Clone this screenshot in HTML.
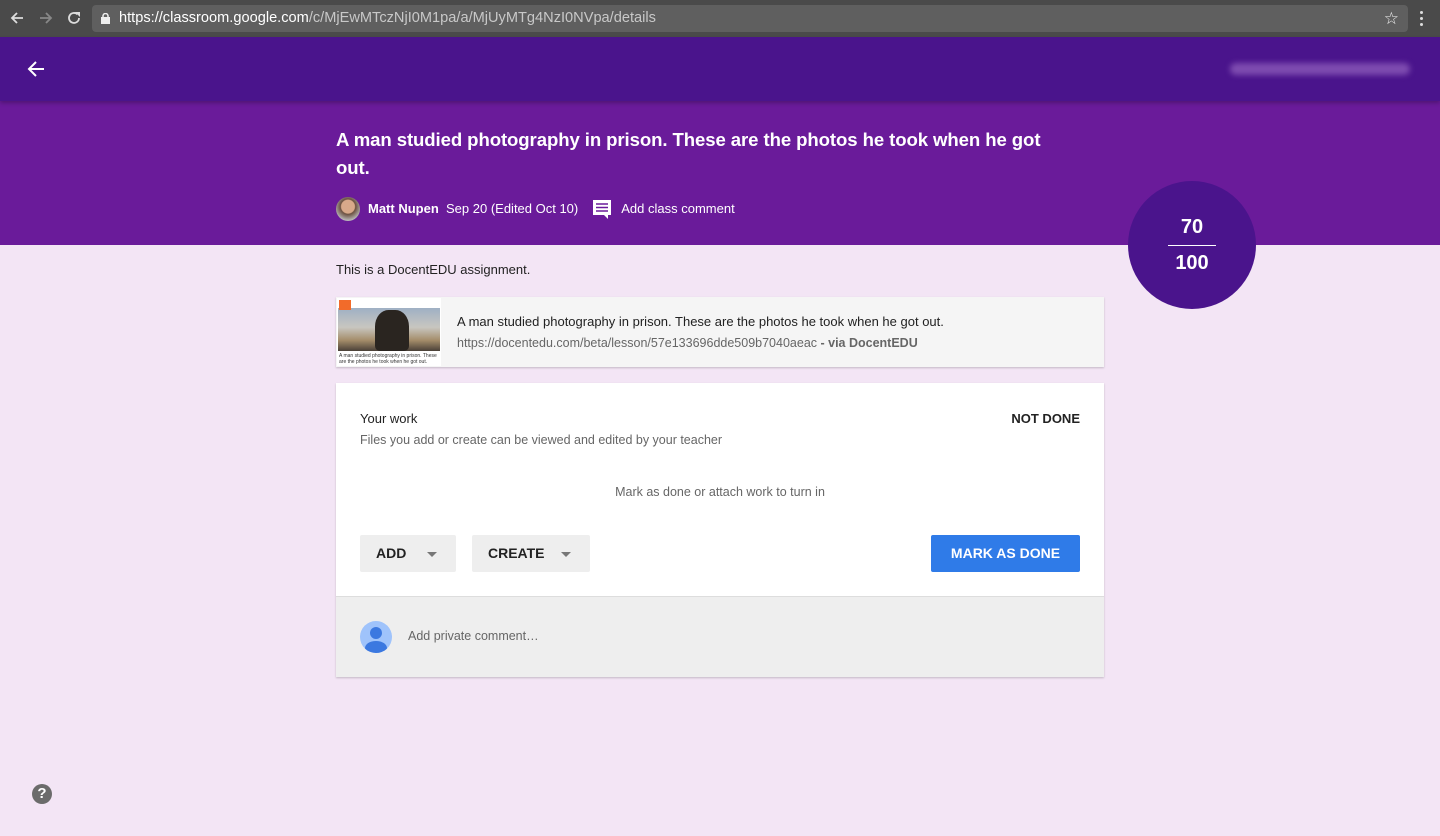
<!DOCTYPE html>
<html><head><meta charset="utf-8"><style>
*{box-sizing:border-box;margin:0;padding:0}
body{width:1440px;height:836px;overflow:hidden;background:#f3e5f5;font-family:"Liberation Sans",Arial,sans-serif;position:relative}
.chrome{position:absolute;left:0;top:0;width:1440px;height:37px;background:#4a4a4a}
.url{position:absolute;left:92px;top:5px;width:1316px;height:27px;background:#5f5f5f;border-radius:4px;color:#fff;font-size:14.6px;line-height:27px;padding-left:27px}
.url span{color:#c8c8c8}
.top{position:absolute;left:0;top:37px;width:1440px;height:64px;background:#4a148c;box-shadow:0 2px 4px rgba(0,0,0,.25);z-index:2}
.hdr{position:absolute;left:0;top:101px;width:1440px;height:144px;background:#6a1b9a}
.title{position:absolute;left:336px;top:126px;width:740px;color:#fff;font-size:18.6px;font-weight:bold;line-height:28px;letter-spacing:-0.1px}
.meta{position:absolute;left:336px;top:197px;height:24px;color:#fff;font-size:13px;line-height:24px;display:flex;align-items:center}
.circle{position:absolute;left:1128px;top:181px;width:128px;height:128px;border-radius:50%;background:#4a148c;color:#fff;font-weight:bold;font-size:20px;text-align:center}
.card{position:absolute;background:#fff;box-shadow:0 1px 2px rgba(0,0,0,.2)}
.btn{position:absolute;top:535px;height:37px;background:#eee;border-radius:2px;font-size:14px;font-weight:bold;color:#222;line-height:37px;padding-left:16px}
.tri{position:absolute;top:17px;width:0;height:0;border-left:5px solid transparent;border-right:5px solid transparent;border-top:5px solid #777}
</style></head><body>
<div class="chrome">
<svg style="position:absolute;left:9px;top:10px" width="16" height="16" viewBox="0 0 16 16"><path d="M14 8H3M8 3L3 8l5 5" stroke="#ddd" stroke-width="1.8" fill="none"/></svg>
<svg style="position:absolute;left:38px;top:10px" width="16" height="16" viewBox="0 0 16 16"><path d="M2 8h11M8 3l5 5-5 5" stroke="#888" stroke-width="1.8" fill="none"/></svg>
<svg style="position:absolute;left:66px;top:10px" width="16" height="16" viewBox="0 0 16 16"><path d="M13 8a5 5 0 1 1-1.5-3.6" stroke="#ddd" stroke-width="1.8" fill="none"/><path d="M9 2h5v5z" fill="#ddd"/></svg>
<div class="url"><svg style="position:absolute;left:9px;top:8px" width="9" height="11"><rect x="0" y="4" width="9" height="7" fill="#eee"/><path d="M2 5V3a2.5 2.5 0 0 1 5 0v2" stroke="#eee" stroke-width="1.5" fill="none"/></svg>https://classroom.google.com<span>/c/MjEwMTczNjI0M1pa/a/MjUyMTg4NzI0NVpa/details</span>
<div style="position:absolute;right:9px;top:0;color:#eee;font-size:17px">☆</div></div>
<div style="position:absolute;left:1420px;top:11px;width:3px;height:3px;background:#ddd;border-radius:50%;box-shadow:0 6px 0 #ddd,0 12px 0 #ddd"></div>
</div>
<div class="top">
<svg style="position:absolute;left:27px;top:23px" width="18" height="18" viewBox="0 0 18 18"><path d="M17 9H3M9 2L2 9l7 7" stroke="#fff" stroke-width="2" fill="none"/></svg>
<div style="position:absolute;left:1230px;top:26px;width:180px;height:12px;background:#7e4cb0;filter:blur(3px);border-radius:6px"></div>
</div>
<div class="hdr"></div>
<div class="title">A man studied photography in prison. These are the photos he took when he got out.</div>
<div class="meta">
<div style="width:24px;height:24px;border-radius:50%;background:radial-gradient(circle at 50% 40%,#d8a98a 0 35%,#6b5040 40%,#bbb 75%);margin-right:8px"></div>
<b>Matt Nupen</b>&nbsp;&nbsp;Sep 20 (Edited Oct 10)
<svg style="margin:0 9px 0 14px" width="20" height="20" viewBox="0 0 20 20"><path d="M1 1h18v15h-3v4l-4-4H1z" fill="#fff"/><path d="M4 5h12M4 8.5h12M4 12h12" stroke="#6a1b9a" stroke-width="1.6"/></svg>
Add class comment</div>
<div class="circle"><div style="position:absolute;top:35px;width:100%">70</div><div style="position:absolute;left:40px;top:64px;width:48px;height:1px;background:#fff"></div><div style="position:absolute;top:71px;width:100%">100</div></div>
<div style="position:absolute;left:336px;top:262px;font-size:13px;color:#222">This is a DocentEDU assignment.</div>
<div class="card" style="left:336px;top:297px;width:768px;height:70px;background:#f5f5f5">
<div style="position:absolute;left:1px;top:1px;width:104px;height:68px;background:#fff;overflow:hidden">
<div style="position:absolute;left:1px;top:10px;width:102px;height:43px;background:linear-gradient(#9fb0c4 0%,#c8c6c0 45%,#a48d6a 75%,#4a4038 100%)"></div>
<div style="position:absolute;left:38px;top:12px;width:34px;height:41px;background:#2a2520;border-radius:40% 40% 5px 5px"></div>
<div style="position:absolute;left:2px;top:2px;width:12px;height:10px;background:#f26b2a"></div>
<div style="position:absolute;left:2px;top:55px;width:110px;font-size:5px;line-height:6px;color:#333;white-space:nowrap">A man studied photography in prison. These<br>are the photos he took when he got out.</div></div>
<div style="position:absolute;left:121px;top:17px;font-size:13px;color:#222">A man studied photography in prison. These are the photos he took when he got out.</div>
<div style="position:absolute;left:121px;top:39px;font-size:12.5px;color:#666">https://docentedu.com/beta/lesson/57e133696dde509b7040aeac <b>- via DocentEDU</b></div>
</div>
<div class="card" style="left:336px;top:383px;width:768px;height:294px">
<div style="position:absolute;left:24px;top:28px;font-size:13px;color:#222">Your work</div>
<div style="position:absolute;right:24px;top:28px;font-size:13px;font-weight:bold;color:#222">NOT DONE</div>
<div style="position:absolute;left:24px;top:50px;font-size:12.5px;color:#666">Files you add or create can be viewed and edited by your teacher</div>
<div style="position:absolute;left:0;width:100%;top:102px;text-align:center;font-size:12.5px;color:#666">Mark as done or attach work to turn in</div>
<div style="position:absolute;left:595px;top:152px;width:149px;height:37px;background:#2f7be8;color:#fff;font-size:14px;font-weight:bold;text-align:center;line-height:37px;border-radius:2px">MARK AS DONE</div>
<div style="position:absolute;left:0;top:213px;width:100%;height:81px;background:#eee;border-top:1px solid #ddd">
<div style="position:absolute;left:24px;top:24px;width:32px;height:32px;border-radius:50%;background:#9fc3fb;overflow:hidden"><div style="position:absolute;left:10px;top:6px;width:12px;height:12px;border-radius:50%;background:#3b78e0"></div><div style="position:absolute;left:5px;top:20px;width:22px;height:14px;border-radius:50%;background:#3b78e0"></div></div>
<div style="position:absolute;left:72px;top:32px;font-size:12.5px;color:#666">Add private comment…</div></div>
</div>
<div class="btn" style="left:360px;width:96px">ADD<div class="tri" style="left:67px"></div></div>
<div class="btn" style="left:472px;width:118px">CREATE<div class="tri" style="left:89px"></div></div>
<div style="position:absolute;left:32px;top:784px;width:20px;height:20px;border-radius:50%;background:#6b6b6b;color:#fff;font-size:15px;font-weight:bold;text-align:center;line-height:20px">?</div>
</body></html>
